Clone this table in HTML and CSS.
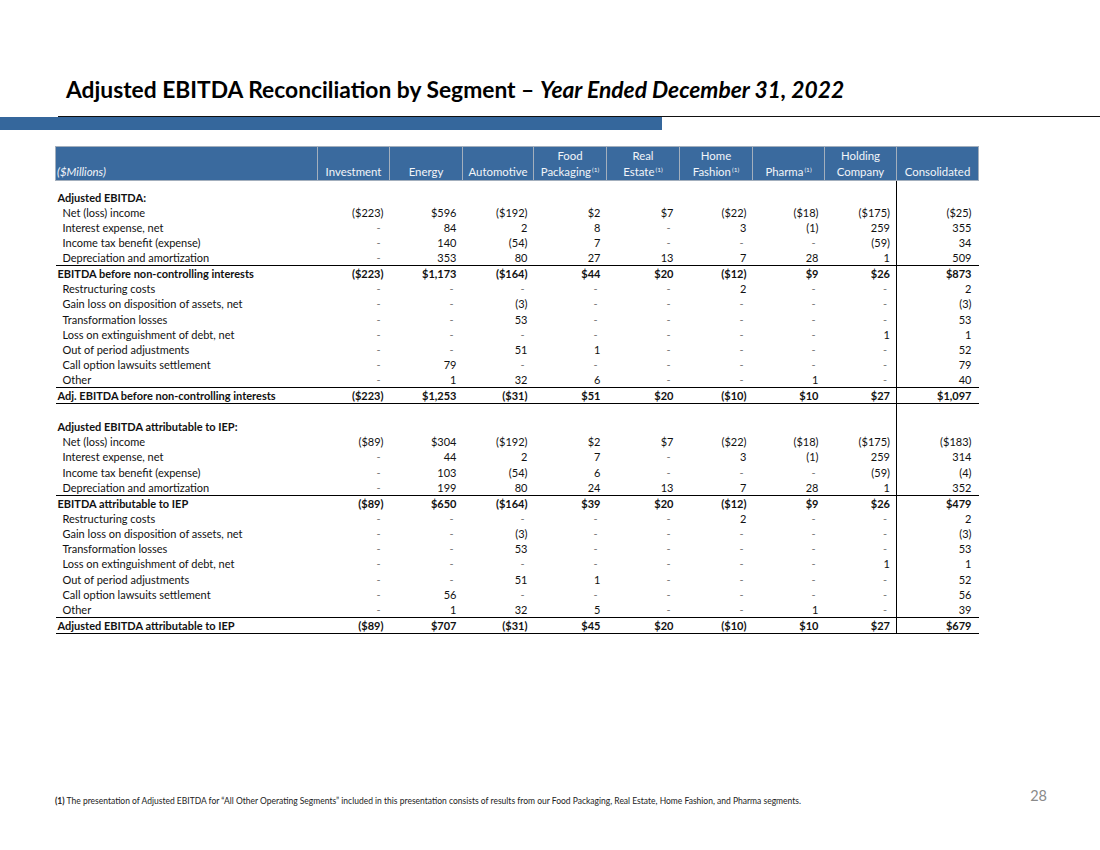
FILE: index.html
```html
<!DOCTYPE html>
<html>
<head>
<meta charset="utf-8">
<link rel="stylesheet" href="styles.css">
</head>
<body>
<div class="slide">
  <h1 class="title">Adjusted EBITDA Reconciliation by Segment – <em>Year Ended December 31, 2022</em></h1>
  <div class="rule"><div class="rule-bar"></div></div>
  <table class="recon">
    <colgroup>
      <col class="c-label"><col class="c-inv"><col class="c-en"><col class="c-auto"><col class="c-food"><col class="c-re"><col class="c-home"><col class="c-ph"><col class="c-hold"><col class="c-cons">
    </colgroup>
    <thead>
      <tr>
        <th class="h-label"><i>($Millions)</i></th>
        <th>Investment</th>
        <th>Energy</th>
        <th>Automotive</th>
        <th>Food<br>Packaging<sup>(1)</sup></th>
        <th>Real<br>Estate<sup>(1)</sup></th>
        <th>Home<br>Fashion<sup>(1)</sup></th>
        <th>Pharma<sup>(1)</sup></th>
        <th>Holding<br>Company</th>
        <th>Consolidated</th>
      </tr>
    </thead>
    <tbody>
      <tr class="spacer"><td></td><td></td><td></td><td></td><td></td><td></td><td></td><td></td><td></td><td class="cons"></td></tr>
      <tr class="sec"><td class="lab">Adjusted EBITDA:</td><td></td><td></td><td></td><td></td><td></td><td></td><td></td><td></td><td class="cons"></td></tr>
      <tr><td class="lab item">Net (loss) income</td><td>($223)</td><td>$596</td><td>($192)</td><td>$2</td><td>$7</td><td>($22)</td><td>($18)</td><td>($175)</td><td class="cons">($25)</td></tr>
      <tr><td class="lab item">Interest expense, net</td><td class="d">-</td><td>84</td><td>2</td><td>8</td><td class="d">-</td><td>3</td><td>(1)</td><td>259</td><td class="cons">355</td></tr>
      <tr><td class="lab item">Income tax benefit (expense)</td><td class="d">-</td><td>140</td><td>(54)</td><td>7</td><td class="d">-</td><td class="d">-</td><td class="d">-</td><td>(59)</td><td class="cons">34</td></tr>
      <tr><td class="lab item">Depreciation and amortization</td><td class="d">-</td><td>353</td><td>80</td><td>27</td><td>13</td><td>7</td><td>28</td><td>1</td><td class="cons">509</td></tr>
      <tr class="total"><td class="lab">EBITDA before non-controlling interests</td><td>($223)</td><td>$1,173</td><td>($164)</td><td>$44</td><td>$20</td><td>($12)</td><td>$9</td><td>$26</td><td class="cons">$873</td></tr>
      <tr><td class="lab item">Restructuring costs</td><td class="d">-</td><td class="d">-</td><td class="d">-</td><td class="d">-</td><td class="d">-</td><td>2</td><td class="d">-</td><td class="d">-</td><td class="cons">2</td></tr>
      <tr><td class="lab item">Gain loss on disposition of assets, net</td><td class="d">-</td><td class="d">-</td><td>(3)</td><td class="d">-</td><td class="d">-</td><td class="d">-</td><td class="d">-</td><td class="d">-</td><td class="cons">(3)</td></tr>
      <tr><td class="lab item">Transformation losses</td><td class="d">-</td><td class="d">-</td><td>53</td><td class="d">-</td><td class="d">-</td><td class="d">-</td><td class="d">-</td><td class="d">-</td><td class="cons">53</td></tr>
      <tr><td class="lab item">Loss on extinguishment of debt, net</td><td class="d">-</td><td class="d">-</td><td class="d">-</td><td class="d">-</td><td class="d">-</td><td class="d">-</td><td class="d">-</td><td>1</td><td class="cons">1</td></tr>
      <tr><td class="lab item">Out of period adjustments</td><td class="d">-</td><td class="d">-</td><td>51</td><td>1</td><td class="d">-</td><td class="d">-</td><td class="d">-</td><td class="d">-</td><td class="cons">52</td></tr>
      <tr><td class="lab item">Call option lawsuits settlement</td><td class="d">-</td><td>79</td><td class="d">-</td><td class="d">-</td><td class="d">-</td><td class="d">-</td><td class="d">-</td><td class="d">-</td><td class="cons">79</td></tr>
      <tr><td class="lab item">Other</td><td class="d">-</td><td>1</td><td>32</td><td>6</td><td class="d">-</td><td class="d">-</td><td>1</td><td class="d">-</td><td class="cons">40</td></tr>
      <tr class="total grand"><td class="lab">Adj. EBITDA before non-controlling interests</td><td>($223)</td><td>$1,253</td><td>($31)</td><td>$51</td><td>$20</td><td>($10)</td><td>$10</td><td>$27</td><td class="cons">$1,097</td></tr>
      <tr class="blank"><td></td><td></td><td></td><td></td><td></td><td></td><td></td><td></td><td></td><td class="cons"></td></tr>
      <tr class="sec"><td class="lab">Adjusted EBITDA attributable to IEP:</td><td></td><td></td><td></td><td></td><td></td><td></td><td></td><td></td><td class="cons"></td></tr>
      <tr><td class="lab item">Net (loss) income</td><td>($89)</td><td>$304</td><td>($192)</td><td>$2</td><td>$7</td><td>($22)</td><td>($18)</td><td>($175)</td><td class="cons">($183)</td></tr>
      <tr><td class="lab item">Interest expense, net</td><td class="d">-</td><td>44</td><td>2</td><td>7</td><td class="d">-</td><td>3</td><td>(1)</td><td>259</td><td class="cons">314</td></tr>
      <tr><td class="lab item">Income tax benefit (expense)</td><td class="d">-</td><td>103</td><td>(54)</td><td>6</td><td class="d">-</td><td class="d">-</td><td class="d">-</td><td>(59)</td><td class="cons">(4)</td></tr>
      <tr><td class="lab item">Depreciation and amortization</td><td class="d">-</td><td>199</td><td>80</td><td>24</td><td>13</td><td>7</td><td>28</td><td>1</td><td class="cons">352</td></tr>
      <tr class="total"><td class="lab">EBITDA attributable to IEP</td><td>($89)</td><td>$650</td><td>($164)</td><td>$39</td><td>$20</td><td>($12)</td><td>$9</td><td>$26</td><td class="cons">$479</td></tr>
      <tr><td class="lab item">Restructuring costs</td><td class="d">-</td><td class="d">-</td><td class="d">-</td><td class="d">-</td><td class="d">-</td><td>2</td><td class="d">-</td><td class="d">-</td><td class="cons">2</td></tr>
      <tr><td class="lab item">Gain loss on disposition of assets, net</td><td class="d">-</td><td class="d">-</td><td>(3)</td><td class="d">-</td><td class="d">-</td><td class="d">-</td><td class="d">-</td><td class="d">-</td><td class="cons">(3)</td></tr>
      <tr><td class="lab item">Transformation losses</td><td class="d">-</td><td class="d">-</td><td>53</td><td class="d">-</td><td class="d">-</td><td class="d">-</td><td class="d">-</td><td class="d">-</td><td class="cons">53</td></tr>
      <tr><td class="lab item">Loss on extinguishment of debt, net</td><td class="d">-</td><td class="d">-</td><td class="d">-</td><td class="d">-</td><td class="d">-</td><td class="d">-</td><td class="d">-</td><td>1</td><td class="cons">1</td></tr>
      <tr><td class="lab item">Out of period adjustments</td><td class="d">-</td><td class="d">-</td><td>51</td><td>1</td><td class="d">-</td><td class="d">-</td><td class="d">-</td><td class="d">-</td><td class="cons">52</td></tr>
      <tr><td class="lab item">Call option lawsuits settlement</td><td class="d">-</td><td>56</td><td class="d">-</td><td class="d">-</td><td class="d">-</td><td class="d">-</td><td class="d">-</td><td class="d">-</td><td class="cons">56</td></tr>
      <tr><td class="lab item">Other</td><td class="d">-</td><td>1</td><td>32</td><td>5</td><td class="d">-</td><td class="d">-</td><td>1</td><td class="d">-</td><td class="cons">39</td></tr>
      <tr class="total grand"><td class="lab">Adjusted EBITDA attributable to IEP</td><td>($89)</td><td>$707</td><td>($31)</td><td>$45</td><td>$20</td><td>($10)</td><td>$10</td><td>$27</td><td class="cons">$679</td></tr>
    </tbody>
  </table>
  <div class="footer">
    <p class="footnote"><b>(1)</b> The presentation of Adjusted EBITDA for “All Other Operating Segments” included in this presentation consists of results from our Food Packaging, Real Estate, Home Fashion, and Pharma segments.</p>
    <span class="page-num">28</span>
  </div>
</div>
</body>
</html>
```
FILE: styles.css
```css
html, body {
  margin: 0;
  padding: 0;
  background: #ffffff;
}

.slide {
  width: 1100px;
  height: 850px;
  display: flex;
  flex-direction: column;
  font-family: Lato, "Open Sans", "Liberation Sans", sans-serif;
  color: #111;
  overflow: hidden;
}

.title {
  margin: 76px 0 0 66px;
  font-size: 22.8px;
  line-height: 27px;
  font-weight: 700;
  color: #000;
  white-space: nowrap;
}

.title em {
  font-style: italic;
}

.rule {
  margin-top: 13px;
  border-top: 1.5px solid #111;
  margin-left: 58px;
  height: 13px;
  position: relative;
}

.rule-bar {
  position: absolute;
  left: -58px;
  top: 0;
  width: 662px;
  height: 13px;
  background: #35679c;
}

.recon {
  margin: 16px 0 0 55px;
  border-collapse: collapse;
  table-layout: fixed;
  width: 923px;
  font-size: 11px;
}

.c-label { width: 262px; }
.c-inv { width: 72px; }
.c-en { width: 73px; }
.c-auto { width: 71px; }
.c-food { width: 73px; }
.c-re { width: 73px; }
.c-home { width: 73px; }
.c-ph { width: 72px; }
.c-hold { width: 72px; }
.c-cons { width: 82px; }

.recon thead th {
  background: #3a6a9e;
  color: #f2f5f9;
  font-weight: 400;
  font-size: 11.4px;
  border: 1px solid #a3afbd;
  height: 32px;
  padding: 0 1px 1px;
  line-height: 15.5px;
  text-align: center;
  vertical-align: bottom;
  white-space: nowrap;
}

.recon thead th.h-label {
  text-align: left;
  padding-left: 1px;
}

.recon sup {
  font-size: 6.5px;
  vertical-align: 4px;
  line-height: 0;
  margin-left: 1px;
}

.recon tbody td {
  height: 15.14px;
  line-height: 15.14px;
  padding: 0 6px 0 0;
  text-align: right;
  white-space: nowrap;
  box-sizing: border-box;
}

.recon tbody td.cons {
  border-left: 1px solid #000;
  padding-right: 7px;
}

.recon tbody td.lab {
  text-align: left;
  padding-left: 2px;
  font-weight: 700;
}

.recon tbody td.item {
  padding-left: 7px;
  font-weight: 400;
}

.recon tbody td.d {
  color: #777;
  padding-right: 9px;
}

.recon tr.spacer td {
  height: 9px;
  line-height: 9px;
}

.recon tr.total td {
  font-weight: 700;
  border-top: 1.5px solid #000;
}

.recon tr.grand td {
  border-bottom: 1.5px solid #000;
}

.footer {
  margin-top: auto;
  margin-bottom: 44px;
  display: flex;
  justify-content: space-between;
  align-items: flex-end;
  padding: 0 53px 0 55px;
}

.footnote {
  margin: 0;
  font-size: 8.5px;
  line-height: 10px;
  color: #222;
}

.page-num {
  font-size: 14.5px;
  color: #8a8a8a;
  line-height: 18px;
  position: relative;
  top: -1px;
}
```
